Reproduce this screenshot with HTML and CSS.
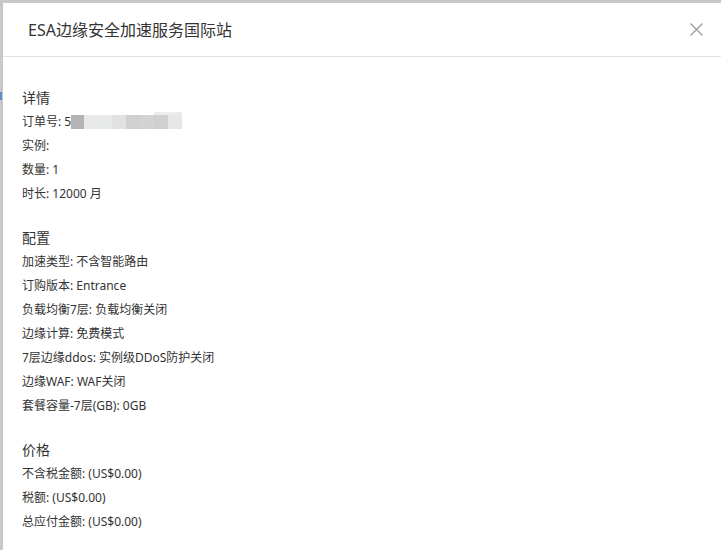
FILE: index.html
```html
<!DOCTYPE html>
<html lang="zh-CN">
<head>
<meta charset="utf-8">
<title>ESA边缘安全加速服务国际站</title>
<link rel="stylesheet" href="styles.css">
</head>
<body>
<div class="backdrop-mark"></div>
<div class="modal">
  <div class="modal-header">
    <div class="modal-title">ESA边缘安全加速服务国际站</div>
    <button class="modal-close" aria-label="关闭">
      <svg width="13" height="13" viewBox="0 0 13 13"><path d="M0.5 0.5 L12.5 12.5 M12.5 0.5 L0.5 12.5" stroke="#9a9a9a" stroke-width="1.3" fill="none"/></svg>
    </button>
  </div>
  <div class="modal-body">
    <section class="group">
      <div class="group-title">详情</div>
      <div class="row">订单号: 5<span class="masked"></span></div>
      <div class="row">实例:</div>
      <div class="row">数量: 1</div>
      <div class="row">时长: 12000 月</div>
    </section>
    <section class="group">
      <div class="group-title">配置</div>
      <div class="row">加速类型: 不含智能路由</div>
      <div class="row">订购版本: Entrance</div>
      <div class="row">负载均衡7层: 负载均衡关闭</div>
      <div class="row">边缘计算: 免费模式</div>
      <div class="row">7层边缘ddos: 实例级DDoS防护关闭</div>
      <div class="row">边缘WAF: WAF关闭</div>
      <div class="row">套餐容量-7层(GB): 0GB</div>
    </section>
    <section class="group">
      <div class="group-title">价格</div>
      <div class="row">不含税金额: (US$0.00)</div>
      <div class="row">税额: (US$0.00)</div>
      <div class="row">总应付金额: (US$0.00)</div>
    </section>
  </div>
</div>
</body>
</html>
```
FILE: styles.css
```css
html, body {
  margin: 0;
  padding: 0;
  height: 100%;
}
body {
  background: #c8c8c8;
  font-family: "Noto Sans", "Noto Sans CJK SC", sans-serif;
  color: #333;
  overflow: hidden;
  position: relative;
}
.backdrop-mark {
  position: absolute;
  left: 0;
  top: 92px;
  width: 2px;
  height: 8px;
  background: #5b8fd6;
}
.modal {
  margin: 3px 0 0 3px;
  background: #fff;
  min-height: calc(100vh - 3px);
}
.modal-header {
  height: 53px;
  border-bottom: 1px solid #e3e3e3;
  display: flex;
  align-items: center;
  justify-content: space-between;
  padding: 0 18px 0 25px;
}
.modal-title {
  font-size: 16px;
  line-height: 24px;
  color: #333;
  margin-top: 1px;
}
.modal-close {
  border: 0;
  background: none;
  padding: 0;
  width: 13px;
  height: 13px;
  display: flex;
  cursor: pointer;
  margin-bottom: 1px;
}
.modal-body {
  padding: 29px 19px 20px;
}
.group {
  margin-bottom: 20px;
}
.group-title {
  font-size: 14px;
  line-height: 24px;
}
.row {
  font-size: 12px;
  line-height: 24px;
}
.masked {
  display: inline-block;
  position: relative;
  width: 111px;
  height: 14px;
  vertical-align: -3px;
  background: linear-gradient(to right,
    #b4b4b4 0, #b4b4b4 13px,
    #e8e9e9 13px, #e8e9e9 41px,
    #e1e1e1 41px, #e1e1e1 55px,
    #cfd0d1 55px, #cfd0d1 69px,
    #d3d3d4 69px, #d3d3d4 83px,
    #d0d0d0 83px, #d0d0d0 97px,
    #e6e7e7 97px, #e6e7e7 111px);
}
.masked::before {
  content: "";
  position: absolute;
  left: 83px;
  top: -3px;
  width: 28px;
  height: 3px;
  background: #ececec;
}
```
